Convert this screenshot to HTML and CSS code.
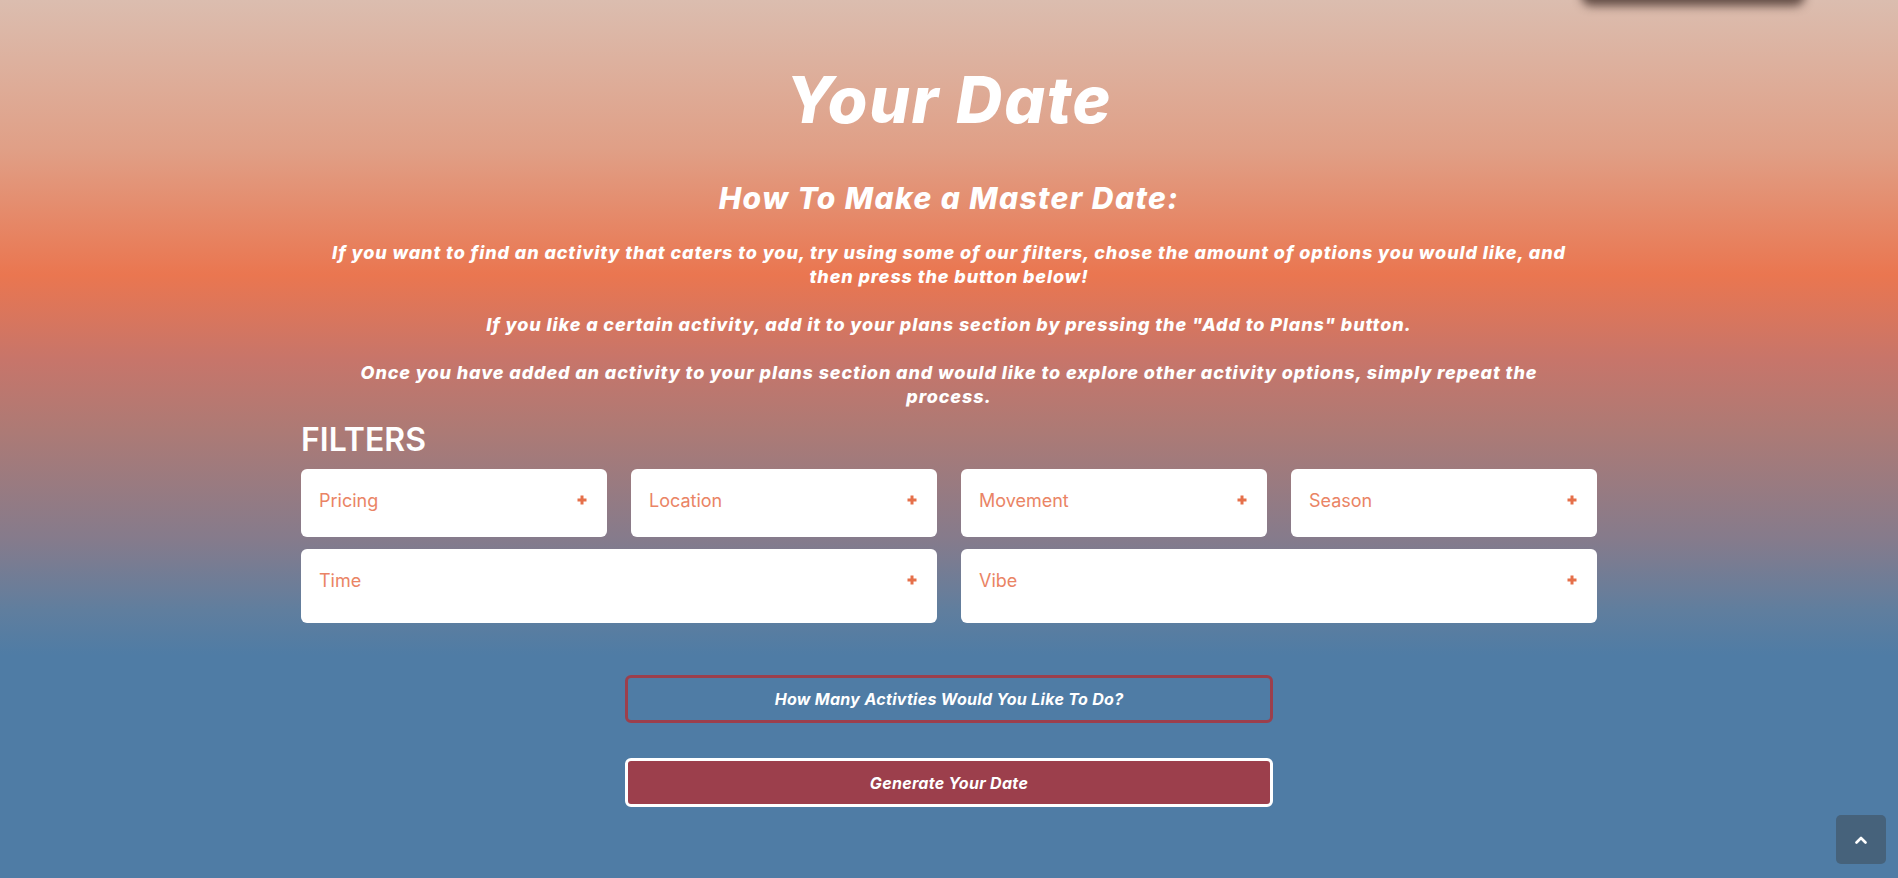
FILE: index.html
```html
<!DOCTYPE html>
<html lang="en">
<head>
<meta charset="utf-8">
<title>Your Date</title>
<link rel="stylesheet" href="styles.css">
</head>
<body>
<div class="page">
  <div class="nav-shadow"></div>
  <header class="hero">
    <h1 class="title">Your Date</h1>
    <h2 class="subtitle">How To Make a Master Date:</h2>
    <div class="intro">
      <p>If you want to find an activity that caters to you, try using some of our filters, chose the amount of options you would like, and then press the button below!</p>
      <p>If you like a certain activity, add it to your plans section by pressing the "Add to Plans" button.</p>
      <p>Once you have added an activity to your plans section and would like to explore other activity options, simply repeat the process.</p>
    </div>
  </header>

  <section class="filters">
    <h2 class="filters-title">FILTERS</h2>
    <div class="filter-grid">
      <div class="filter-card">
        <button class="filter-toggle"><span>Pricing</span><svg class="plus" viewBox="0 0 10 10"><path d="M5 0.5V9.5M0.5 5H9.5"/></svg></button>
      </div>
      <div class="filter-card">
        <button class="filter-toggle"><span>Location</span><svg class="plus" viewBox="0 0 10 10"><path d="M5 0.5V9.5M0.5 5H9.5"/></svg></button>
      </div>
      <div class="filter-card">
        <button class="filter-toggle"><span>Movement</span><svg class="plus" viewBox="0 0 10 10"><path d="M5 0.5V9.5M0.5 5H9.5"/></svg></button>
      </div>
      <div class="filter-card">
        <button class="filter-toggle"><span>Season</span><svg class="plus" viewBox="0 0 10 10"><path d="M5 0.5V9.5M0.5 5H9.5"/></svg></button>
      </div>
      <div class="filter-card wide">
        <button class="filter-toggle"><span>Time</span><svg class="plus" viewBox="0 0 10 10"><path d="M5 0.5V9.5M0.5 5H9.5"/></svg></button>
      </div>
      <div class="filter-card wide">
        <button class="filter-toggle"><span>Vibe</span><svg class="plus" viewBox="0 0 10 10"><path d="M5 0.5V9.5M0.5 5H9.5"/></svg></button>
      </div>
    </div>
  </section>

  <section class="actions">
    <button class="btn btn-count">How Many Activties Would You Like To Do?</button>
    <button class="btn btn-generate">Generate Your Date</button>
  </section>

  <a class="back-top" href="#"><svg viewBox="0 0 12 8"><path d="M1.5 6.5L6 2L10.5 6.5"/></svg></a>
</div>
</body>
</html>
```

FILE: styles.css
```css
* { box-sizing: border-box; }

html, body {
  margin: 0;
  padding: 0;
}

body {
  font-family: Inter, "Open Sans", sans-serif;
  color: #ffffff;
  background: #4f7ca5;
}

.page {
  position: relative;
  min-height: 100vh;
  overflow: hidden;
  background: linear-gradient(180deg,
    #dbbdaf 0px,
    #e09f86 150px,
    #ea7650 275px,
    #c7756a 360px,
    #ad7a75 430px,
    #857b8c 540px,
    #607e9e 610px,
    #4f7ca5 655px,
    #4f7ca5 100%);
  padding-bottom: 50px;
}

.nav-shadow {
  position: absolute;
  top: -40px;
  left: 1584px;
  width: 218px;
  height: 40px;
  border-radius: 8px;
  background: #6a5a54;
  box-shadow: 0 3px 10px 3px rgba(60, 40, 35, 0.75);
}

.hero {
  text-align: center;
  padding-top: 61px;
}

.title {
  margin: 0;
  font-size: 64px;
  line-height: 77px;
  font-weight: 800;
  font-style: italic;
  letter-spacing: 1.8px;
}

.subtitle {
  margin: 42px 0 0;
  font-size: 30px;
  line-height: 36px;
  font-weight: 800;
  font-style: italic;
  letter-spacing: 1.4px;
}

.intro {
  max-width: 1250px;
  margin: 25px auto 0;
}

.intro p {
  margin: 0 0 24px;
  font-size: 18px;
  line-height: 24px;
  font-weight: 800;
  font-style: italic;
  letter-spacing: 0.9px;
}

.intro p:last-child {
  margin-bottom: 0;
}

.filters {
  width: 1296px;
  margin: 12px auto 0;
}

.filters-title {
  margin: 0 0 10px;
  font-size: 32px;
  line-height: 38px;
  font-weight: 600;
  text-align: left;
}

.filter-grid {
  display: grid;
  grid-template-columns: repeat(4, 1fr);
  column-gap: 24px;
  row-gap: 12px;
}

.filter-card {
  background: #ffffff;
  border-radius: 6px;
  min-height: 68px;
}

.filter-card.wide {
  grid-column: span 2;
  min-height: 74px;
}

.filter-toggle {
  display: flex;
  width: 100%;
  height: 62px;
  align-items: center;
  justify-content: space-between;
  padding: 0 20px 0 18px;
  border: 0;
  background: transparent;
  font-family: inherit;
  font-size: 18px;
  font-weight: 400;
  color: #ea8465;
  cursor: pointer;
}

.plus {
  width: 10px;
  height: 10px;
  fill: none;
  stroke: #e6704a;
  stroke-width: 3;
}

.actions {
  width: 648px;
  margin: 52px auto 0;
  display: flex;
  flex-direction: column;
  gap: 35px;
}

.btn {
  display: block;
  width: 100%;
  border-radius: 6px;
  border: 3px solid #9c3f4c;
  font-family: inherit;
  font-size: 16px;
  font-weight: 700;
  font-style: italic;
  letter-spacing: 0.3px;
  color: #ffffff;
  cursor: pointer;
}

.btn-count {
  height: 48px;
  background: transparent;
}

.btn-generate {
  height: 49px;
  background: #9c3f4c;
  border-color: #ffffff;
}

.back-top {
  position: fixed;
  right: 12px;
  bottom: 14px;
  width: 50px;
  height: 49px;
  border-radius: 5px;
  background: #46627b;
  display: flex;
  align-items: center;
  justify-content: center;
}

.back-top svg {
  width: 12px;
  height: 8px;
  fill: none;
  stroke: #ffffff;
  stroke-width: 2.6;
  stroke-linecap: round;
  stroke-linejoin: round;
}
```
